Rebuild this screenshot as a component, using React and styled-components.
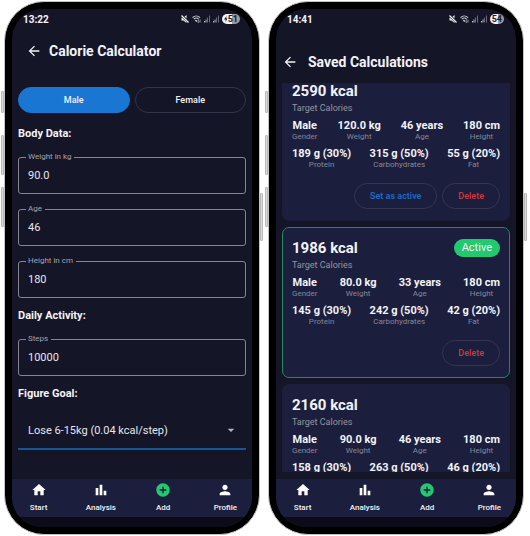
import React, { useId, useLayoutEffect, useRef, useState } from "react";
import styled, { createGlobalStyle } from "styled-components";
import {
  MdAddCircle,
  MdArrowBack,
  MdArrowDropDown,
  MdBarChart,
  MdHome,
  MdPerson,
} from "react-icons/md";

const GlobalStyle = createGlobalStyle`
  * {
    box-sizing: border-box;
  }
  body {
    margin: 0;
    background-color: #ffffff;
    font-family: Roboto, "Liberation Sans", sans-serif;
  }
  button, input, select {
    font-family: inherit;
  }
`;

const Page = styled.div`
  display: grid;
  grid-template-columns: 1fr 1fr;
  gap: 8px;
  height: 100vh;
  min-height: 500px;
  padding: 1px 6px 1px 4px;
`;

const Phone = styled.div`
  position: relative;
  min-width: 0;
  min-height: 0;
  padding: 7px;
  border: 1px solid #c4c4c4;
  border-radius: 40px;
  background-color: #000000;
`;

const SideButton = styled.span`
  position: absolute;
  top: ${({ $top }) => $top}px;
  ${({ $side }) => $side}: -4px;
  width: 3px;
  height: ${({ $length }) => $length}px;
  border: 1px solid #b9b9b9;
  border-radius: 1px;
  background-color: #dcdcdc;
`;

const Screen = styled.div`
  display: flex;
  flex-direction: column;
  height: 100%;
  overflow: hidden;
  border-radius: 30px;
  background-color: #151528;
  color: #f3f3f7;
`;

const StatusBar = styled.div`
  display: flex;
  align-items: center;
  justify-content: space-between;
  flex: none;
  height: 20px;
  padding: 0 12px 0 11px;
`;

const Time = styled.span`
  font-size: 10px;
  font-weight: 700;
`;

const StatusIcons = styled.div`
  display: flex;
  align-items: center;
  gap: 3px;
  color: #f3f3f7;
`;

const Battery = styled.span`
  display: flex;
  align-items: center;
  justify-content: center;
  height: 10px;
  padding: 0 2px;
  border-radius: 5px;
  background: linear-gradient(to right, #f1f1f4 54%, #9a9aa4 54%);
  color: #1b1b2c;
  font-size: 9px;
  font-weight: 700;
  line-height: 10px;
`;

const Header = styled.header`
  display: flex;
  align-items: center;
  flex: none;
  gap: 7px;
  height: 44px;
  padding: 0 14px;
`;

const ListHeader = styled(Header)`
  gap: 10px;
  height: 54px;
  padding: 12px 6px 0;
`;

const BackButton = styled.button`
  display: flex;
  padding: 0;
  border: none;
  background: none;
  color: #f3f3f7;
  cursor: pointer;
`;

const Title = styled.h1`
  margin: 0;
  font-size: 14px;
  font-weight: 700;
  white-space: nowrap;
`;

const Form = styled.form`
  flex: 1;
  min-height: 0;
  padding: 14px 6px 0;
  overflow: hidden;
`;

const Toggle = styled.div`
  display: grid;
  grid-template-columns: 1fr 1fr;
  gap: 5px;
  margin-bottom: 14px;
`;

const ToggleButton = styled.button`
  height: 26px;
  padding: 0;
  border: 1px solid ${({ $on }) => ($on ? "#1976d2" : "#34344a")};
  border-radius: 13px;
  background-color: ${({ $on }) => ($on ? "#1976d2" : "transparent")};
  color: #f3f3f7;
  font-size: 9px;
  font-weight: 500;
  cursor: pointer;
`;

const SectionTitle = styled.h2`
  margin: 0 0 11px;
  font-size: 11px;
  font-weight: 700;
  line-height: 14px;
`;

const Fields = styled.div`
  display: grid;
  gap: 10px;
  margin-bottom: 11px;
`;

const Outline = styled.fieldset`
  min-width: 0;
  height: 42px;
  margin: 0;
  padding: 0 7px;
  border: 1px solid #858592;
  border-radius: 3px;
`;

const Legend = styled.legend`
  padding: 0 3px 0 2px;
  color: #a3a3ae;
  font-size: 8px;
  line-height: 10px;
`;

const Input = styled.input`
  display: block;
  width: 100%;
  height: 27px;
  padding: 0 2px;
  border: none;
  outline: none;
  background: none;
  color: #e6e6ec;
  font-size: 11px;
`;

const SelectBox = styled.div`
  display: flex;
  align-items: center;
  height: 38px;
  padding-right: 7px;
  border-bottom: 2px solid #17559b;
  color: #b4b4bd;
`;

const Select = styled.select`
  flex: 1;
  min-width: 0;
  padding: 0 10px;
  border: none;
  outline: none;
  appearance: none;
  background: none;
  color: #e6e6ec;
  font-size: 11px;
`;

const List = styled.div`
  display: flex;
  flex: 1;
  flex-direction: column;
  gap: 6px;
  min-height: 0;
  margin-bottom: 7px;
  padding: 0 6px;
  overflow-y: auto;
  scrollbar-width: none;
`;

const Card = styled.article`
  flex: none;
  padding: 11px 9px;
  border: 1px solid ${({ $active }) => ($active ? "#208a5c" : "#1b1f3d")};
  border-radius: 7px;
  background-color: #1b1f3d;
`;

const CardTop = styled.div`
  display: flex;
  align-items: center;
  justify-content: space-between;
  height: 18px;
`;

const Calories = styled.h2`
  margin: 0;
  font-size: 15px;
  font-weight: 700;
  line-height: 18px;
`;

const Badge = styled.span`
  padding: 0 8px;
  border-radius: 9px;
  background-color: #24c96f;
  font-size: 11px;
  line-height: 18px;
`;

const Caption = styled.p`
  margin: 0 0 4px;
  color: #94959f;
  font-size: 9px;
  line-height: 16px;
`;

const Stats = styled.div`
  display: flex;
  justify-content: space-between;
  margin-bottom: 6px;
`;

const Stat = styled.div`
  display: flex;
  flex-direction: column;
  align-items: center;
`;

const StatValue = styled.span`
  font-size: 11px;
  font-weight: 700;
  line-height: 12px;
  white-space: nowrap;
`;

const StatLabel = styled.span`
  color: #85869a;
  font-size: 8px;
  line-height: 10px;
`;

const Actions = styled.div`
  display: flex;
  justify-content: flex-end;
  gap: 5px;
  padding-top: 7px;
`;

const ActionButton = styled.button`
  height: 26px;
  padding: 0 15px;
  border: 1px solid #363450;
  border-radius: 13px;
  background: none;
  color: ${({ $danger }) => ($danger ? "#cf3a41" : "#1f6fc6")};
  font-size: 9px;
  font-weight: 500;
  cursor: pointer;
`;

const TabBar = styled.nav`
  display: grid;
  grid-template-columns: repeat(4, 1fr);
  flex: none;
  gap: 9px;
  height: 38px;
  padding-top: 3px;
  background-color: #1b1f3d;
`;

const Tab = styled.a`
  display: flex;
  flex-direction: column;
  align-items: center;
  gap: 5px;
  color: #f3f3f7;
  font-size: 8px;
  font-weight: 500;
  line-height: 10px;
  text-decoration: none;
  svg {
    color: ${({ $accent }) => ($accent ? "#24c96f" : "#ffffff")};
  }
`;

const SystemBar = styled.div`
  flex: none;
  height: 10px;
  background-color: #0b0c18;
`;

const MuteIcon = () => (
  <svg width="8" height="8" viewBox="0 0 16 16">
    <path d="M1 5H5L11 0V16L5 11H1Z" fill="#f3f3f7" />
    <path d="M0 0L16 15" stroke="#151528" strokeWidth="5" />
    <path d="M1 1L15 15" stroke="#f3f3f7" strokeWidth="2.500" />
  </svg>
);

const WifiIcon = () => (
  <svg width="9" height="8" viewBox="0 0 20 18" fill="none" stroke="#c9c9d2" strokeWidth="2.500">
    <path d="M1 6C6 1 13 1 18 6M4 9.500C7.500 6 11.500 6 15 9.500" />
    <path d="M7 11.500L9.500 14L11 12" fill="#c9c9d2" />
    <path d="M14 10V17M12 15L14 17L16 15M18 17V10" strokeWidth="1.500" />
  </svg>
);

const SignalIcon = () => (
  <svg width="6" height="8" viewBox="0 0 12 16">
    <path d="M0 12H2V15H0ZM3 9H5V15H3Z" fill="#b9b9c4" />
    <path d="M6 5H8V15H6ZM10 1H12V15H10Z" fill="#6a6a7c" />
  </svg>
);

const BoltIcon = () => (
  <svg width="4" height="8" viewBox="0 0 8 16" fill="#1b1b2c">
    <path d="M5 2L0 9H3.500L3 14L7 7H4.500Z" />
  </svg>
);

const tabs = [
  { label: "Start", Icon: MdHome },
  { label: "Analysis", Icon: MdBarChart },
  { label: "Add", Icon: MdAddCircle, accent: true },
  { label: "Profile", Icon: MdPerson },
];

const calculations = [
  {
    calories: 2590,
    body: ["Male", "120.0 kg", "46 years", "180 cm"],
    macros: ["189 g (30%)", "315 g (50%)", "55 g (20%)"],
  },
  {
    calories: 1986,
    body: ["Male", "80.0 kg", "33 years", "180 cm"],
    macros: ["145 g (30%)", "242 g (50%)", "42 g (20%)"],
  },
  {
    calories: 2160,
    body: ["Male", "90.0 kg", "46 years", "180 cm"],
    macros: ["158 g (30%)", "263 g (50%)", "46 g (20%)"],
  },
];

const bodyLabels = ["Gender", "Weight", "Age", "Height"];
const macroLabels = ["Protein", "Carbohydrates", "Fat"];

const PhoneFrame = ({ time, battery, charging, children }) => (
  <Phone>
    <SideButton $side="left" $top={89} $length={22} />
    <SideButton $side="left" $top={133} $length={40} />
    <SideButton $side="left" $top={185} $length={40} />
    <SideButton $side="right" $top={191} $length={48} />
    <Screen>
      <StatusBar>
        <Time>{time}</Time>
        <StatusIcons>
          <MuteIcon />
          <WifiIcon />
          <SignalIcon />
          <SignalIcon />
          <Battery>
            {charging && <BoltIcon />}
            {battery}
          </Battery>
        </StatusIcons>
      </StatusBar>
      {children}
      <TabBar>
        {tabs.map(({ label, Icon, accent }) => (
          <Tab key={label} href={`#${label.toLowerCase()}`} $accent={accent}>
            <Icon size={16} />
            {label}
          </Tab>
        ))}
      </TabBar>
      <SystemBar />
    </Screen>
  </Phone>
);

const Field = ({ label, initial }) => {
  const id = useId();
  const [value, setValue] = useState(initial);
  return (
    <Outline>
      <Legend>
        <label htmlFor={id}>{label}</label>
      </Legend>
      <Input id={id} value={value} onChange={(e) => setValue(e.target.value)} />
    </Outline>
  );
};

const Calculator = () => {
  const [gender, setGender] = useState("Male");
  return (
    <>
      <Header>
        <BackButton aria-label="Back">
          <MdArrowBack size={16} />
        </BackButton>
        <Title>Calorie Calculator</Title>
      </Header>
      <Form>
        <Toggle>
          {["Male", "Female"].map((name) => (
            <ToggleButton
              key={name}
              type="button"
              $on={gender === name}
              aria-pressed={gender === name}
              onClick={() => setGender(name)}
            >
              {name}
            </ToggleButton>
          ))}
        </Toggle>
        <SectionTitle>Body Data:</SectionTitle>
        <Fields>
          <Field label="Weight in kg" initial="90.0" />
          <Field label="Age" initial="46" />
          <Field label="Height in cm" initial="180" />
        </Fields>
        <SectionTitle>Daily Activity:</SectionTitle>
        <Fields>
          <Field label="Steps" initial="10000" />
        </Fields>
        <SectionTitle>
          <label htmlFor="goal">Figure Goal:</label>
        </SectionTitle>
        <SelectBox>
          <Select id="goal">
            <option>Lose 6-15kg (0.04 kcal/step)</option>
          </Select>
          <MdArrowDropDown size={16} />
        </SelectBox>
      </Form>
    </>
  );
};

const StatRow = ({ values, labels }) => (
  <Stats>
    {values.map((value, i) => (
      <Stat key={labels[i]}>
        <StatValue>{value}</StatValue>
        <StatLabel>{labels[i]}</StatLabel>
      </Stat>
    ))}
  </Stats>
);

const SavedCalculations = () => {
  const [active, setActive] = useState(1986);
  const list = useRef(null);

  // open slightly scrolled so the active card sits in the middle
  useLayoutEffect(() => {
    list.current.scrollTop = 13;
  }, []);

  return (
    <>
      <ListHeader>
        <BackButton aria-label="Back">
          <MdArrowBack size={16} />
        </BackButton>
        <Title>Saved Calculations</Title>
      </ListHeader>
      <List ref={list}>
        {calculations.map(({ calories, body, macros }) => (
          <Card key={calories} $active={calories === active}>
            <CardTop>
              <Calories>{calories} kcal</Calories>
              {calories === active && <Badge>Active</Badge>}
            </CardTop>
            <Caption>Target Calories</Caption>
            <StatRow values={body} labels={bodyLabels} />
            <StatRow values={macros} labels={macroLabels} />
            <Actions>
              {calories !== active && (
                <ActionButton onClick={() => setActive(calories)}>
                  Set as active
                </ActionButton>
              )}
              <ActionButton $danger>Delete</ActionButton>
            </Actions>
          </Card>
        ))}
      </List>
    </>
  );
};

const App = () => (
  <>
    <GlobalStyle />
    <Page>
      <PhoneFrame time="13:22" battery="51" charging>
        <Calculator />
      </PhoneFrame>
      <PhoneFrame time="14:41" battery="54">
        <SavedCalculations />
      </PhoneFrame>
    </Page>
  </>
);

export default App;
